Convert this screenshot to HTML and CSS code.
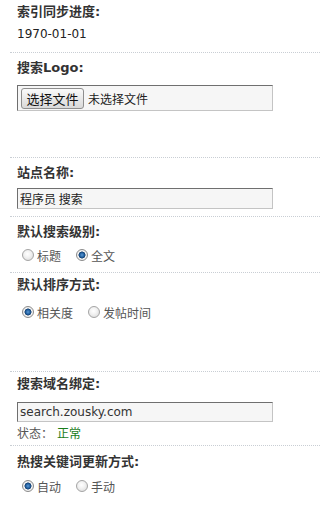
FILE: index.html
```html
<!DOCTYPE html>
<html lang="zh-CN">
<head>
<meta charset="utf-8">
<title>搜索设置</title>
<link rel="stylesheet" href="styles.css">
</head>
<body>
<div class="form">
  <div class="section s1">
    <div class="label">索引同步进度:</div>
    <div class="value">1970-01-01</div>
  </div>
  <div class="section s2">
    <div class="label">搜索Logo:</div>
    <div class="filebox"><span class="filebtn">选择文件</span><span class="filetext">未选择文件</span></div>
  </div>
  <div class="section s3">
    <div class="label">站点名称:</div>
    <div class="input">程序员 搜索</div>
  </div>
  <div class="section s4">
    <div class="label">默认搜索级别:</div>
    <div class="radios">
      <span class="radio"></span><span class="rtext">标题</span>
      <span class="radio checked"></span><span class="rtext">全文</span>
    </div>
  </div>
  <div class="section s5">
    <div class="label">默认排序方式:</div>
    <div class="radios">
      <span class="radio checked"></span><span class="rtext">相关度</span>
      <span class="radio"></span><span class="rtext">发帖时间</span>
    </div>
  </div>
  <div class="section s6">
    <div class="label">搜索域名绑定:</div>
    <div class="input latin">search.zousky.com</div>
    <div class="status">状态：<span class="ok">正常</span></div>
  </div>
  <div class="section s7">
    <div class="label">热搜关键词更新方式:</div>
    <div class="radios">
      <span class="radio checked"></span><span class="rtext">自动</span>
      <span class="radio"></span><span class="rtext">手动</span>
    </div>
  </div>
</div>
</body>
</html>
```
FILE: styles.css
```css
html, body {
  margin: 0;
  padding: 0;
  background: #fff;
}
body {
  font-family: "DejaVu Sans", "Noto Sans CJK SC", sans-serif;
  font-size: 12px;
  color: #222;
}
.form {
  margin-left: 10px;
}
.section {
  border-bottom: 1px dotted #c9ced4;
  padding-left: 7px;
}
.s7 { border-bottom: none; }
.label {
  font-family: "DejaVu Sans", "Noto Sans CJK SC", sans-serif;
  font-weight: bold;
  font-size: 13px;
  line-height: 20px;
  height: 20px;
  color: #333;
}
.value {
  line-height: 20px;
  height: 20px;
  margin-top: 2px;
  color: #222;
}
.s1 { padding-top: 2px; padding-bottom: 8px; }
.s2 { padding-top: 5px; padding-bottom: 46px; }
.s3 { padding-top: 5px; padding-bottom: 7px; }
.s4 { padding-top: 5px; padding-bottom: 7px; }
.s5 { padding-top: 2px; padding-bottom: 49px; }
.s6 { padding-top: 2px; padding-bottom: 3px; }
.s7 { padding-top: 6px; }

.filebox, .input {
  box-sizing: border-box;
  width: 256px;
  border: 1px solid;
  border-color: #6f6f6f #c4c4c4 #c4c4c4 #6f6f6f;
  background: #f6f6f6;
}
.filebox {
  margin-top: 7px;
  height: 26px;
  display: flex;
  align-items: center;
  padding-left: 3px;
}
.filebtn {
  box-sizing: border-box;
  height: 21px;
  width: 63px;
  border: 1px solid #8e8e8e;
  border-radius: 3px;
  background: linear-gradient(#fafafa, #e6e6e6 60%, #d9d9d9);
  font-family: "Noto Sans CJK SC", sans-serif;
  font-size: 13px;
  line-height: 19px;
  text-align: center;
  color: #111;
}
.filetext {
  margin-left: 4px;
  font-family: "Noto Sans CJK SC", sans-serif;
  font-size: 12px;
  color: #222;
}
.input {
  height: 21px;
  padding-left: 2px;
  line-height: 19px;
  font-family: "Noto Sans CJK SC", sans-serif;
  color: #222;
}
.s3 .input { margin-top: 5px; }
.s6 .input {
  margin-top: 8px;
  height: 20px;
  line-height: 18px;
}
.input.latin {
  font-family: "DejaVu Sans", sans-serif;
  font-size: 12px;
  color: #333;
}
.status {
  margin-top: 2px;
  line-height: 18px;
  height: 18px;
  font-family: "Noto Sans CJK SC", sans-serif;
  color: #555;
}
.ok {
  color: #1a7d1a;
  margin-left: 4px;
}
.radios {
  display: flex;
  align-items: center;
  height: 20px;
  padding-left: 5px;
  font-family: "Noto Sans CJK SC", sans-serif;
  color: #555;
}
.s4 .radios { margin-top: 3px; }
.s5 .radios { margin-top: 7px; }
.s7 .radios { margin-top: 4px; }
.radio {
  box-sizing: border-box;
  width: 12px;
  height: 12px;
  border-radius: 50%;
  border: 1px solid #a4a4a4;
  background: radial-gradient(circle at 45% 40%, #ffffff 0, #f2f2f2 40%, #d6d6d6 100%);
  flex: none;
}
.radio.checked {
  border-color: #8b8b8b;
  background: radial-gradient(circle at 50% 50%, #5d9ad6 0, #1f5e9e 2.2px, #173f6e 3.2px, #f4f4f4 3.8px, #e2e2e2 100%);
}
.rtext {
  margin-left: 3px;
  margin-right: 15px;
}
```
